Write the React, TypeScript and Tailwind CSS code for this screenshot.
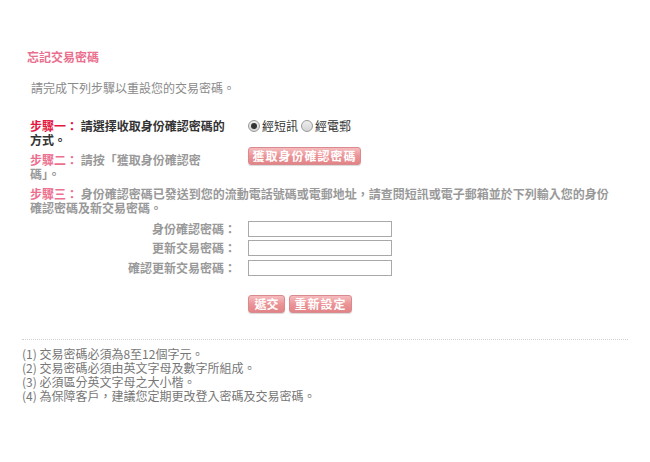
const font = { fontFamily: '"Noto Sans CJK TC", "Liberation Sans", sans-serif' };

function PinkButton({ children, className = "" }: { children: React.ReactNode; className?: string }) {
  return (
    <button
      className={
        "h-[18px] rounded-[3px] border border-[#d88a8e] bg-gradient-to-b from-[#f6bcbe] via-[#eb9497] to-[#e28487] text-[12px] leading-[16px] font-bold text-white shadow-[0_1px_1px_rgba(0,0,0,0.15)] " +
        className
      }
    >
      {children}
    </button>
  );
}

function Radio({ checked, label }: { checked?: boolean; label: string }) {
  return (
    <label className="flex items-center gap-[2px]">
      <span className="flex h-[12px] w-[12px] items-center justify-center rounded-full border border-[#9a9a9a] bg-gradient-to-b from-[#eeeeee] to-[#d4d4d4]">
        {checked && <span className="h-[6px] w-[6px] rounded-full bg-[#333]" />}
      </span>
      <span className="text-[12px] text-[#333]">{label}</span>
    </label>
  );
}

function Field({ label }: { label: string }) {
  return (
    <div className="flex h-[19.5px] items-center">
      <div className="w-[218px] pr-[12px] text-right text-[12px] font-bold text-[#999]">{label}</div>
      <input className="h-[16px] w-[144px] border border-[#a9a9a9] bg-white" />
    </div>
  );
}

export default function App() {
  return (
    <div className="h-[462px] w-[650px] bg-white" style={font}>
      <div className="pl-[27px] pt-[49px] text-[12px] font-bold leading-[16px] text-[#ea6f8e]">忘記交易密碼</div>

      <div className="mt-[15px] pl-[31px] text-[12px] leading-[16px] text-[#8a8a8a]">請完成下列步驟以重設您的交易密碼。</div>

      <div className="mt-[23px] flex pl-[30px]">
        <div className="w-[218px] text-[12px] font-bold leading-[14px] text-[#333]">
          <span className="text-[#e4173f]">步驟一：</span> 請選擇收取身份確認密碼的
          <br />
          方式。
        </div>
        <div className="flex items-start gap-[3px] leading-[14px]">
          <Radio checked label="經短訊" />
          <Radio label="經電郵" />
        </div>
      </div>

      <div className="mt-[6px] flex pl-[30px]">
        <div className="w-[218px] text-[12px] font-bold leading-[14px] text-[#999]">
          <span className="text-[#ec6f8f]">步驟二：</span> 請按「獲取身份確認密
          <br />
          碼」。
        </div>
        <PinkButton className="-mt-[6px] w-[113px] tracking-[1px]">獲取身份確認密碼</PinkButton>
      </div>

      <div className="mt-[6px] w-[610px] pl-[30px] text-[12px] font-bold leading-[14px] text-[#999]">
        <span className="text-[#ec6f8f]">步驟三：</span> 身份確認密碼已發送到您的流動電話號碼或電郵地址，請查閱短訊或電子郵箱並於下列輸入您的身份確認密碼及新交易密碼。
      </div>

      <div className="mt-[4px] pl-[30px]">
        <Field label="身份確認密碼：" />
        <Field label="更新交易密碼：" />
        <Field label="確認更新交易密碼：" />
      </div>

      <div className="mt-[17px] flex gap-[4px] pl-[248px]">
        <PinkButton className="w-[37px]">遞交</PinkButton>
        <PinkButton className="w-[63px] tracking-[1px]">重新設定</PinkButton>
      </div>

      <div className="mx-[22px] mt-[26px] border-t border-dotted border-[#cfcfcf]" />

      <div className="mt-[7px] pl-[22px] text-[12px] leading-[14px] text-[#777]">
        <div>(1) 交易密碼必須為8至12個字元。</div>
        <div>(2) 交易密碼必須由英文字母及數字所組成。</div>
        <div>(3) 必須區分英文字母之大小楷。</div>
        <div>(4) 為保障客戶，建議您定期更改登入密碼及交易密碼。</div>
      </div>
    </div>
  );
}
